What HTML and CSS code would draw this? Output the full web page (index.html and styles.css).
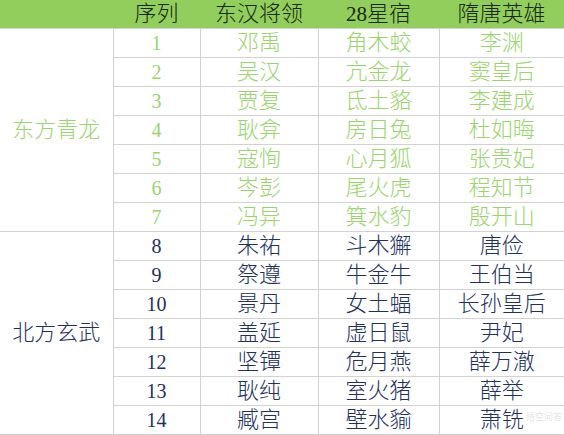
FILE: index.html
```html
<!DOCTYPE html>
<html lang="zh">
<head>
<meta charset="utf-8">
<link rel="stylesheet" href="styles.css">
</head>
<body>
<div class="sheet">
<table class="grid">
  <colgroup>
    <col class="c1"><col class="c2"><col class="c3"><col class="c4"><col class="c5">
  </colgroup>
  <thead>
    <tr class="head">
      <th></th><th>序列</th><th>东汉将领</th><th><span class="n">28</span>星宿</th><th>隋唐英雄</th>
    </tr>
  </thead>
  <tbody class="east">
    <tr><td class="group g-east" rowspan="7">东方青龙</td><td class="num">1</td><td>邓禹</td><td>角木蛟</td><td>李渊</td></tr>
    <tr><td class="num">2</td><td>吴汉</td><td>亢金龙</td><td>窦皇后</td></tr>
    <tr><td class="num">3</td><td>贾复</td><td>氐土貉</td><td>李建成</td></tr>
    <tr><td class="num">4</td><td>耿弇</td><td>房日兔</td><td>杜如晦</td></tr>
    <tr><td class="num">5</td><td>寇恂</td><td>心月狐</td><td>张贵妃</td></tr>
    <tr><td class="num">6</td><td>岑彭</td><td>尾火虎</td><td>程知节</td></tr>
    <tr><td class="num">7</td><td>冯异</td><td>箕水豹</td><td>殷开山</td></tr>
  </tbody>
  <tbody class="north">
    <tr><td class="group g-north" rowspan="7">北方玄武</td><td class="num">8</td><td>朱祐</td><td>斗木獬</td><td>唐俭</td></tr>
    <tr><td class="num">9</td><td>祭遵</td><td>牛金牛</td><td>王伯当</td></tr>
    <tr><td class="num">10</td><td>景丹</td><td>女土蝠</td><td>长孙皇后</td></tr>
    <tr><td class="num">11</td><td>盖延</td><td>虚日鼠</td><td>尹妃</td></tr>
    <tr><td class="num">12</td><td>坚镡</td><td>危月燕</td><td>薛万澈</td></tr>
    <tr><td class="num">13</td><td>耿纯</td><td>室火猪</td><td>薛举</td></tr>
    <tr><td class="num">14</td><td>臧宫</td><td>壁水貐</td><td>萧铣</td></tr>
  </tbody>
</table>
<span class="mark">悟空问答</span>
</div>
</body>
</html>
```

FILE: styles.css
```css
html, body {
  margin: 0;
  padding: 0;
  background: #ffffff;
}

.sheet {
  position: relative;
  width: 564px;
  height: 435px;
  overflow: hidden;
}

.grid {
  border-collapse: collapse;
  table-layout: fixed;
  width: 564px;
  font-family: "Liberation Serif", "Noto Sans CJK SC", serif;
  font-size: 22px;
  font-weight: 300;
}

.c1 { width: 113px; }
.c2 { width: 87px; }
.c3 { width: 118px; }
.c4 { width: 121px; }
.c5 { width: 125px; }

.head th {
  height: 28px;
  padding: 0;
  background: #91ce5c;
  color: #1b2614;
  font-weight: 300;
  text-align: center;
  line-height: 28px;
  border: none;
}

.head .n {
  font-size: 21px;
}

.grid td {
  height: 28px;
  padding: 0;
  text-align: center;
  line-height: 28px;
  border: 1px solid #d2d2d2;
  white-space: nowrap;
}

.grid tr > td:last-child {
  border-right: none;
}

.grid td.num {
  font-size: 20px;
}

.east td {
  color: #9ad46c;
}

.north td {
  color: #22305f;
}

.grid td.group {
  border-left: none;
  vertical-align: middle;
}

.g-east {
  text-align: left;
  padding-left: 3px;
}

.g-north {
  text-align: center;
}

.mark {
  position: absolute;
  right: 2px;
  bottom: 12px;
  font-family: "Noto Sans CJK SC", sans-serif;
  font-size: 9px;
  color: rgba(190, 190, 190, 0.45);
}
```
